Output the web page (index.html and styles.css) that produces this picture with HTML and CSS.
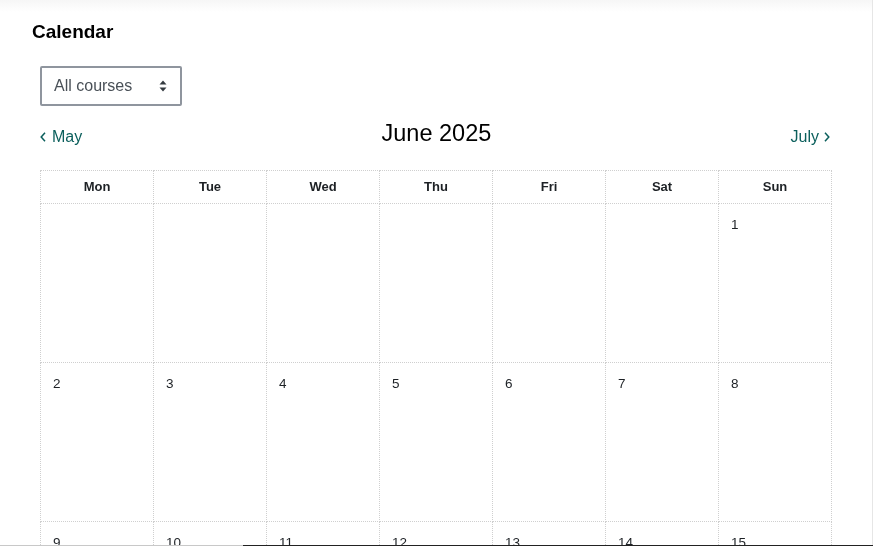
FILE: index.html
```html
<!DOCTYPE html>
<html lang="en">
<head>
<meta charset="utf-8">
<title>Calendar</title>
<link rel="stylesheet" href="styles.css">
</head>
<body>
<div class="top-shade"></div>
<div class="page">
  <h2 class="title">Calendar</h2>
  <div class="content">
    <div class="select">
      <span class="select-text">All courses</span>
      <svg class="select-arrows" width="8" height="12" viewBox="0 0 8 12"><path d="M4 0.5 L7.5 4.5 H0.5 Z M4 11.5 L7.5 7.5 H0.5 Z" fill="#343a40"/></svg>
    </div>
    <div class="month-nav">
      <a class="nav-link prev"><svg width="6" height="10" viewBox="0 0 6 10"><path d="M5 0.8 L1.2 5 L5 9.2" fill="none" stroke="currentColor" stroke-width="1.5"/></svg>May</a>
      <div class="month">June 2025</div>
      <a class="nav-link next">July<svg width="6" height="10" viewBox="0 0 6 10"><path d="M1 0.8 L4.8 5 L1 9.2" fill="none" stroke="currentColor" stroke-width="1.5"/></svg></a>
    </div>
    <table class="cal">
      <thead>
        <tr><th>Mon</th><th>Tue</th><th>Wed</th><th>Thu</th><th>Fri</th><th>Sat</th><th>Sun</th></tr>
      </thead>
      <tbody>
        <tr><td></td><td></td><td></td><td></td><td></td><td></td><td><span class="day">1</span></td></tr>
        <tr><td><span class="day">2</span></td><td><span class="day">3</span></td><td><span class="day">4</span></td><td><span class="day">5</span></td><td><span class="day">6</span></td><td><span class="day">7</span></td><td><span class="day">8</span></td></tr>
        <tr><td><span class="day">9</span></td><td><span class="day">10</span></td><td><span class="day">11</span></td><td><span class="day">12</span></td><td><span class="day">13</span></td><td><span class="day">14</span></td><td><span class="day">15</span></td></tr>
      </tbody>
    </table>
  </div>
</div>
<div class="edge-right"></div>
<div class="edge-bottom"><div class="edge-bottom-light"></div><div class="edge-bottom-dark"></div></div>
</body>
</html>
```

FILE: styles.css
```css
html, body {
  margin: 0;
  padding: 0;
  overflow: hidden;
  background: #fff;
}
body {
  font-family: "Liberation Sans", Arial, sans-serif;
  color: #1d2125;
}
.top-shade {
  position: fixed;
  left: 0;
  top: 0;
  width: 100%;
  height: 12px;
  background: linear-gradient(#f6f6f6, #ffffff);
}
.page {
  position: relative;
  padding: 20px 0 0 32px;
}
.title {
  margin: 0;
  font-size: 19px;
  font-weight: bold;
  line-height: 23px;
  color: #000;
}
.content {
  padding-left: 8px;
  width: 791px;
}
.select {
  margin-top: 23px;
  box-sizing: border-box;
  width: 142px;
  height: 40px;
  border: 2px solid #8f959e;
  border-radius: 2px;
  display: flex;
  align-items: center;
  justify-content: space-between;
  padding: 0 13px 0 12px;
}
.select-text {
  font-size: 16px;
  color: #495057;
}
.select-arrows {
  display: block;
}
.month-nav {
  margin-top: 12px;
  height: 52px;
  display: flex;
  justify-content: space-between;
  align-items: flex-start;
}
.nav-link {
  margin-top: 9px;
  font-size: 16px;
  line-height: 20px;
  color: #0b5f5c;
  display: flex;
  align-items: center;
  gap: 6px;
}
.nav-link.next {
  gap: 5px;
  margin-right: 1px;
}
.month {
  font-size: 23.5px;
  line-height: 30px;
  color: #000;
}
.cal {
  border-collapse: collapse;
  table-layout: fixed;
  width: 792px;
}
.cal th, .cal td {
  border: 1px dotted #cfcfcf;
  padding: 0;
}
.cal th {
  height: 30px;
  padding-bottom: 2px;
  font-size: 13px;
  font-weight: bold;
  color: #1d2125;
  text-align: center;
}
.cal td {
  height: 158px;
  vertical-align: top;
}
.day {
  display: block;
  padding: 11px 0 0 12px;
  font-size: 13.5px;
  line-height: 20px;
  color: #1d2125;
}
.edge-right {
  position: fixed;
  top: 0;
  right: 0;
  width: 1px;
  height: 100%;
  background: #e6e6e6;
}
.edge-bottom {
  position: fixed;
  left: 0;
  bottom: 0;
  width: 100%;
  height: 1px;
  display: flex;
}
.edge-bottom-light {
  width: 243px;
  background: #c8c8c8;
}
.edge-bottom-dark {
  flex: 1;
  background: #222;
}
```
